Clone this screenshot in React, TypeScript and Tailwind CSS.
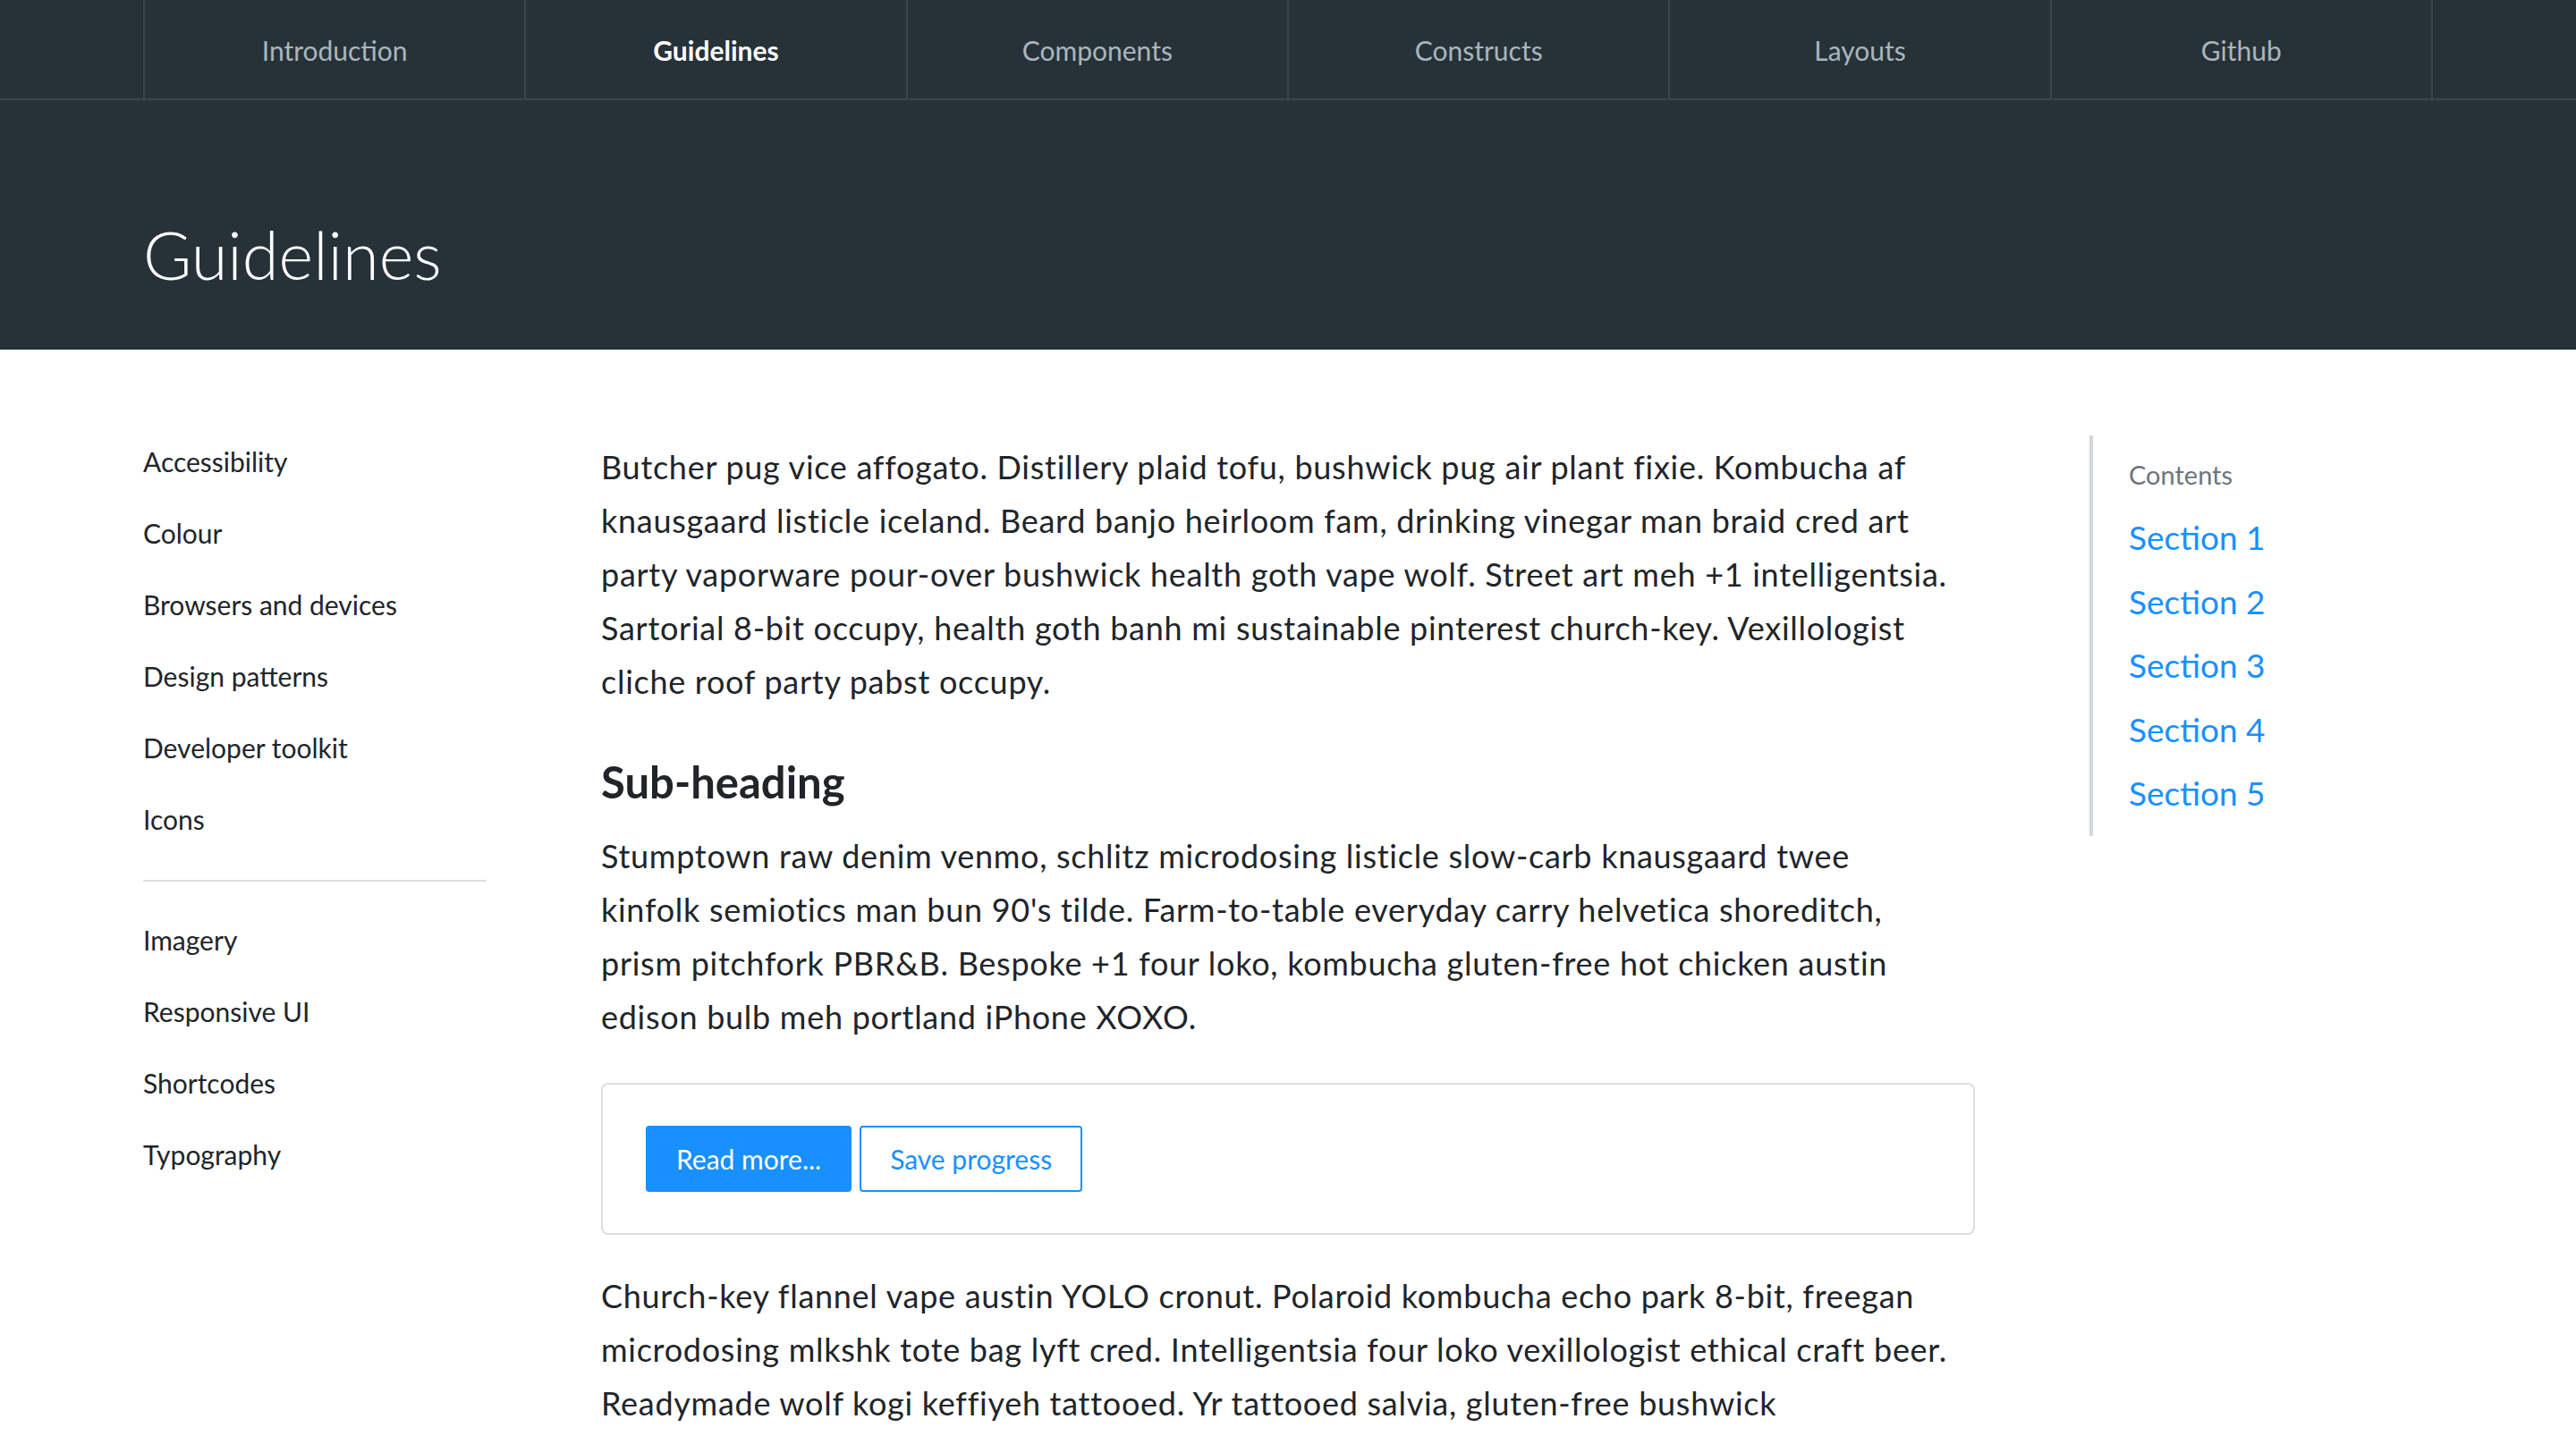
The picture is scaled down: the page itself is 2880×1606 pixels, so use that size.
const navItems = [
  { label: 'Introduction' },
  { label: 'Guidelines', active: true },
  { label: 'Components' },
  { label: 'Constructs' },
  { label: 'Layouts' },
  { label: 'Github' },
];

const sideTop = ['Accessibility', 'Colour', 'Browsers and devices', 'Design patterns', 'Developer toolkit', 'Icons'];
const sideBottom = ['Imagery', 'Responsive UI', 'Shortcodes', 'Typography'];
const sections = ['Section 1', 'Section 2', 'Section 3', 'Section 4', 'Section 5'];

function TopNav() {
  return (
    <nav className="bg-[#263238] border-b-2 border-[#37474f]">
      <ul className="mx-auto w-[2560px] grid grid-cols-6 border-r-2 border-[#37474f]">
        {navItems.map((item) => (
          <li
            key={item.label}
            className={
              item.active
                ? 'h-[110px] pt-[3px] flex items-center justify-center border-l-2 border-[#37474f] text-[30px] font-bold text-white'
                : 'h-[110px] pt-[3px] flex items-center justify-center border-l-2 border-[#37474f] text-[30px] text-[#aab6bd]'
            }
          >
            {item.label}
          </li>
        ))}
      </ul>
    </nav>
  );
}

function SideLink({ label }: { label: string }) {
  return <li className="h-[80px] flex items-center text-[30px] text-[#212529]">{label}</li>;
}

export default function App() {
  return (
    <div className="min-h-screen bg-white font-['Lato','Liberation_Sans',sans-serif] text-[#212529]">
      <TopNav />
      <header className="bg-[#263238] h-[279px]">
        <div className="mx-auto w-[2560px] pt-[128px]">
          <h1 className="text-[74px] font-light leading-[90px] text-white">Guidelines</h1>
        </div>
      </header>

      <section className="mx-auto w-[2560px] pt-[85px] grid grid-cols-[384px_1536px_384px] gap-x-[128px]">
        <aside>
          <ul>
            {sideTop.map((s) => (
              <SideLink key={s} label={s} />
            ))}
          </ul>
          <div className="mt-[28px] mb-[25px] h-[2px] bg-[#dddddd]" />
          <ul>
            {sideBottom.map((s) => (
              <SideLink key={s} label={s} />
            ))}
          </ul>
        </aside>

        <main className="pt-[16px] text-[36px] leading-[60px] tracking-[0.02em]">
          <p>
            Butcher pug vice affogato. Distillery plaid tofu, bushwick pug air plant fixie. Kombucha af
            <br />
            knausgaard listicle iceland. Beard banjo heirloom fam, drinking vinegar man braid cred art
            <br />
            party vaporware pour-over bushwick health goth vape wolf. Street art meh +1 intelligentsia.
            <br />
            Sartorial 8-bit occupy, health goth banh mi sustainable pinterest church-key. Vexillologist
            <br />
            cliche roof party pabst occupy.
          </p>
          <h2 className="mt-[52px] mb-[23px] text-[49px] font-bold leading-[60px] tracking-normal">Sub-heading</h2>
          <p>
            Stumptown raw denim venmo, schlitz microdosing listicle slow-carb knausgaard twee
            <br />
            kinfolk semiotics man bun 90's tilde. Farm-to-table everyday carry helvetica shoreditch,
            <br />
            prism pitchfork PBR&amp;B. Bespoke +1 four loko, kombucha gluten-free hot chicken austin
            <br />
            edison bulb meh portland iPhone XOXO.
          </p>
          <div className="mt-[44px] mb-[38px] border-2 border-[#dedede] rounded-[8px] px-[48px] py-[46px] flex gap-[9px] tracking-normal">
            <button className="h-[74px] px-[34px] rounded-[4px] bg-[#1890ff] text-white text-[30px] leading-none">
              Read more...
            </button>
            <button className="h-[74px] px-[32px] rounded-[4px] border-2 border-[#1890ff] bg-white text-[#1890ff] text-[30px] leading-none">
              Save progress
            </button>
          </div>
          <p>
            Church-key flannel vape austin YOLO cronut. Polaroid kombucha echo park 8-bit, freegan
            <br />
            microdosing mlkshk tote bag lyft cred. Intelligentsia four loko vexillologist ethical craft beer.
            <br />
            Readymade wolf kogi keffiyeh tattooed. Yr tattooed salvia, gluten-free bushwick
            <br />
            cloud bread pabst. Migas fingerstache offal pour-over.
          </p>
        </main>

        <div className="pt-[11px] self-start">
          <div className="border-l-4 border-[#d3d7db] pl-[40px] pt-[24px] pb-[12px]">
            <p className="text-[29px] leading-[40px] text-[#6c757d] mb-[14px]">Contents</p>
            <ul>
              {sections.map((s) => (
                <li key={s} className="h-[71.5px] flex items-center text-[37px] text-[#1890ff]">
                  {s}
                </li>
              ))}
            </ul>
          </div>
        </div>
      </section>
    </div>
  );
}
